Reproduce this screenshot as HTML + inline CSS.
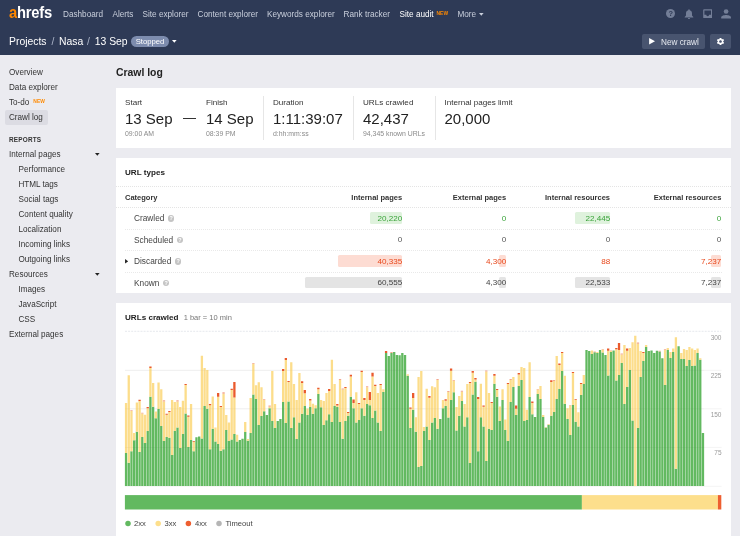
<!DOCTYPE html>
<html>
<head>
<meta charset="utf-8">
<style>
*{box-sizing:border-box;margin:0;padding:0}
html,body{width:740px;height:536px;overflow:hidden}
body{background:#ebebf0;font-family:"Liberation Sans",sans-serif;color:#333;position:relative;font-size:8.5px}
.abs{position:absolute;white-space:nowrap}
#hdr{position:absolute;left:0;top:0;width:740px;height:54.5px}
#bg,#fg{position:absolute;left:0;top:0;width:740px;height:536px}
#fg{-webkit-mask-image:linear-gradient(#000,#000);mask-image:linear-gradient(#000,#000)}
.cbg{position:absolute;left:116px;width:615px;background:#fff}
.bb{position:absolute;height:11.2px;border-radius:1.5px}
.nav{position:absolute;top:10.3px;font-size:8.2px;color:#c9cfdc;white-space:nowrap;line-height:10px}
.nav.act{color:#fff}
.bc{top:34.5px;font-size:10.4px;color:#fff;line-height:14px}
.new{color:#ff8a00;font-size:4.9px;font-weight:bold;position:relative;top:-2.5px;letter-spacing:0.1px;margin-left:0.5px}
.sb{position:absolute;left:9px;font-size:8.15px;color:#333;white-space:nowrap;line-height:10px}
.sb.in{left:18.5px}
.card{position:absolute;left:116px;width:615px}
.lbl{position:absolute;font-size:8.1px;color:#333;white-space:nowrap;line-height:10px;top:10px}
.big{position:absolute;font-size:15px;color:#222;white-space:nowrap;line-height:18px;top:22px}
.sub{position:absolute;font-size:6.9px;color:#8a8a8a;white-space:nowrap;line-height:8px;top:41.5px}
.vd{position:absolute;top:8px;height:44px;width:1px;background:#e6e6e6}
.th{position:absolute;font-size:7.5px;font-weight:bold;color:#333;white-space:nowrap;line-height:10px;top:34.5px}
.r{text-align:right}
.row{position:absolute;left:9px;width:596.3px;height:21.5px}
.row .c{position:absolute;top:5.5px;font-size:8.3px;line-height:10px;white-space:nowrap;color:#444}
.row .v{position:absolute;top:6.2px;font-size:8.1px;line-height:10px;white-space:nowrap;text-align:right;color:#555}
.row .b{position:absolute;top:4.9px;height:11.2px;border-radius:1.5px}
.q{display:inline-block;width:6.6px;height:6.6px;border-radius:50%;background:#c4c4c4;color:#fff;font-size:5.4px;line-height:6.9px;text-align:center;font-weight:bold;vertical-align:0.9px;margin-left:3.4px}
.dl{position:absolute;left:9px;width:597px;height:0;border-top:1px dotted #e9e9e9}
.row .v.g{color:#3aa33a}.row .v.rd{color:#e8491d}.row .v.k{color:#444}
</style>
</head>
<body>
<div id="bg">
<div class="abs" style="left:0;top:0;width:740px;height:54.500px;background:#2e3a56"></div>
<div class="abs" style="left:131px;top:35.800px;width:37.900px;height:11.200px;border-radius:5.600px;background:#7d8cae"></div>
<div class="abs" style="left:642px;top:33.5px;width:63px;height:15.5px;border-radius:2px;background:#48546f"></div>
<div class="abs" style="left:710px;top:33.5px;width:21px;height:15.5px;border-radius:2px;background:#48546f"></div>
<div class="abs" style="left:666.1px;top:9.2px;width:9.100px;height:9.100px;border-radius:50%;background:#737e97"></div>
<div class="abs" style="left:4.5px;top:109.5px;width:43px;height:15.5px;border-radius:2px;background:#dcdce3"></div>
<div class="cbg" style="top:88px;height:60px"></div>
<div class="cbg" style="top:158px;height:135px"></div>
<div class="cbg" style="top:302.700px;height:240px"></div>
<div class="bb" style="left:370.2px;top:212.4px;width:32.1px;background:#dff2dd"></div>
<div class="bb" style="left:575.1px;top:212.4px;width:35.2px;background:#dff2dd"></div>
<div class="bb" style="left:337.6px;top:255.4px;width:64.7px;background:#fddcd3"></div>
<div class="bb" style="left:499.4px;top:255.4px;width:6.9px;background:#fddcd3"></div>
<div class="bb" style="left:711.1px;top:255.4px;width:10.2px;background:#fddcd3"></div>
<div class="bb" style="left:305.3px;top:276.9px;width:97px;background:#e4e4e4"></div>
<div class="bb" style="left:499.4px;top:276.9px;width:6.9px;background:#e4e4e4"></div>
<div class="bb" style="left:575.1px;top:276.9px;width:35.2px;background:#e4e4e4"></div>
<div class="bb" style="left:711.1px;top:276.9px;width:10.2px;background:#e4e4e4"></div>
</div>
<div id="fg">
<div id="hdr">
  <div class="abs" style="left:9.2px;top:4.1px;font-size:15px;font-weight:bold;color:#fff;line-height:18px;letter-spacing:-0.25px;transform:scale(0.985,1.09);transform-origin:0 78%"><span style="color:#ff8800">a</span>hrefs</div>
  <div class="nav" style="left:63px">Dashboard</div>
  <div class="nav" style="left:112.5px">Alerts</div>
  <div class="nav" style="left:142.5px">Site explorer</div>
  <div class="nav" style="left:197.5px">Content explorer</div>
  <div class="nav" style="left:267px">Keywords explorer</div>
  <div class="nav" style="left:343.5px">Rank tracker</div>
  <div class="nav act" style="left:399.5px">Site audit <span class="new">NEW</span></div>
  <div class="nav" style="left:457.5px">More</div><svg class="abs" style="left:479.2px;top:12.8px" width="4.6" height="2.8" viewBox="0 0 10 6"><path fill="#c9cfdc" d="M0 0h10L5 6z"/></svg>

  <div class="abs bc" style="left:9px">Projects</div><div class="abs bc" style="left:51.5px;color:#aab3c7">/</div><div class="abs bc" style="left:59px">Nasa</div><div class="abs bc" style="left:87px;color:#aab3c7">/</div><div class="abs bc" style="left:94.7px">13 Sep</div>
  <div class="abs" style="left:131px;top:35.800px;width:37.900px;height:11.200px;color:#fff;font-size:7.700px;line-height:11.400px;text-align:center">Stopped</div>
  <svg class="abs" style="left:172.400px;top:40.300px" width="4.6" height="2.8" viewBox="0 0 10 6"><path fill="#fff" d="M0 0h10L5 6z"/></svg>

  <svg class="abs" style="left:648.9px;top:38.3px" width="6.2" height="6.6" viewBox="0 0 6 6.6"><path fill="#fff" d="M0 0L6 3.300L0 6.600z"/></svg>
  <div class="abs" style="left:661px;top:37.800px;font-size:8.200px;color:#e6e9f0;line-height:10px">New crawl</div>
  <svg class="abs" style="left:716px;top:37px" width="9" height="9" viewBox="0 0 24 24"><path fill="#fff" d="M19.14 12.94c.04-.3.06-.61.06-.94 0-.32-.02-.64-.07-.94l2.03-1.58a.49.49 0 0 0 .12-.61l-1.92-3.32a.488.488 0 0 0-.59-.22l-2.39.96c-.5-.38-1.03-.7-1.62-.94l-.36-2.54a.484.484 0 0 0-.48-.41h-3.84c-.24 0-.43.17-.47.41l-.36 2.54c-.59.24-1.13.57-1.62.94l-2.39-.96c-.22-.08-.47 0-.59.22L2.74 8.87c-.12.21-.08.47.12.61l2.03 1.58c-.05.3-.09.63-.09.94s.02.64.07.94l-2.03 1.58a.49.49 0 0 0-.12.61l1.92 3.32c.12.22.37.29.59.22l2.39-.96c.5.38 1.03.7 1.62.94l.36 2.54c.05.24.24.41.48.41h3.84c.24 0 .44-.17.47-.41l.36-2.54c.59-.24 1.13-.56 1.62-.94l2.39.96c.22.08.47 0 .59-.22l1.92-3.32c.12-.22.07-.47-.12-.61l-2.01-1.58zM12 15.6c-1.98 0-3.6-1.62-3.6-3.6s1.620-3.600 3.600-3.600 3.600 1.620 3.600 3.600-1.620 3.600-3.600 3.600z"/></svg>

  <!-- top right icons -->
  <div class="abs" style="left:666.1px;top:9.2px;width:9.100px;height:9.100px;color:#2e3a56;font-size:7.400px;font-weight:bold;line-height:9.500px;text-align:center">?</div>
  <svg class="abs" style="left:684.1px;top:8.800px" width="10" height="10.200" viewBox="0 0 20 20.400"><path fill="#737e97" d="M10 0.600c0.900 0 1.500 0.600 1.500 1.400v0.500c2.900 0.700 4.500 3.200 4.500 6.200v4.500l2.600 2.600v1H1.400v-1L4 13.200V8.700c0-3 1.600-5.500 4.500-6.200V2c0-0.800 0.600-1.400 1.500-1.400zM7.900 17.800h4.200c0 1.200-0.900 2.100-2.100 2.100s-2.100-0.900-2.100-2.100z"/></svg>
  <svg class="abs" style="left:702.7px;top:9.100px" width="9.400" height="9.400" viewBox="0 0 18.800 18.800"><path fill="#737e97" fill-rule="evenodd" d="M2 0.400h14.800c0.900 0 1.600 0.700 1.600 1.600v14.800c0 0.900-0.700 1.600-1.600 1.600H2c-0.900 0-1.600-0.700-1.600-1.600V2c0-0.900 0.700-1.600 1.600-1.600zM2.800 2.800v8.800h3.700c0 1.600 1.300 2.800 2.900 2.800s2.900-1.200 2.900-2.800h3.700V2.800z"/></svg>
  <svg class="abs" style="left:720.9px;top:9.100px" width="10.200" height="9.800" viewBox="0 0 20.400 19.600"><circle cx="10.200" cy="5" r="4.700" fill="#737e97"/><path fill="#737e97" d="M0.400 19.200v-2.400c0-3 6.500-4.600 9.800-4.600s9.800 1.600 9.800 4.600v2.400z"/></svg>
</div>

<!-- sidebar -->
<div class="sb" style="top:68px">Overview</div>
<div class="sb" style="top:83px">Data explorer</div>
<div class="sb" style="top:98px">To-do <span class="new" style="margin-left:1.7px">NEW</span></div>
<div class="sb" style="top:113px">Crawl log</div>
<div class="sb" style="top:134.5px;font-size:6.400px;font-weight:bold;letter-spacing:0.200px">REPORTS</div>
<div class="sb" style="top:150px">Internal pages</div>
<svg class="abs" style="left:95.2px;top:152.8px" width="4.6" height="2.8" viewBox="0 0 10 6"><path fill="#222" d="M0 0h10L5 6z"/></svg>
<div class="sb in" style="top:165px">Performance</div>
<div class="sb in" style="top:180px">HTML tags</div>
<div class="sb in" style="top:195px">Social tags</div>
<div class="sb in" style="top:210px">Content quality</div>
<div class="sb in" style="top:225px">Localization</div>
<div class="sb in" style="top:240px">Incoming links</div>
<div class="sb in" style="top:255px">Outgoing links</div>
<div class="sb" style="top:270px">Resources</div>
<svg class="abs" style="left:95.2px;top:272.8px" width="4.6" height="2.8" viewBox="0 0 10 6"><path fill="#222" d="M0 0h10L5 6z"/></svg>
<div class="sb in" style="top:285px">Images</div>
<div class="sb in" style="top:300px">JavaScript</div>
<div class="sb in" style="top:315px">CSS</div>
<div class="sb" style="top:330px">External pages</div>

<!-- title -->
<div class="abs" style="left:116px;top:65.7px;font-size:10.4px;font-weight:bold;color:#222;line-height:14px">Crawl log</div>

<!-- card 1 -->
<div class="card" style="top:88px;height:60px">
  <div class="lbl" style="left:9px">Start</div>
  <div class="big" style="left:9px">13 Sep</div>
  <div class="sub" style="left:9px">09:00 AM</div>
  <div class="abs" style="left:66.500px;top:30px;width:13.500px;height:1.200px;background:#333"></div>
  <div class="lbl" style="left:90px">Finish</div>
  <div class="big" style="left:90px">14 Sep</div>
  <div class="sub" style="left:90px">08:39 PM</div>
  <div class="vd" style="left:147px"></div>
  <div class="lbl" style="left:157px">Duration</div>
  <div class="big" style="left:157px">1:11:39:07</div>
  <div class="sub" style="left:157px">d:hh:mm:ss</div>
  <div class="vd" style="left:237px"></div>
  <div class="lbl" style="left:247px">URLs crawled</div>
  <div class="big" style="left:247px">42,437</div>
  <div class="sub" style="left:247px">94,345 known URLs</div>
  <div class="vd" style="left:319px"></div>
  <div class="lbl" style="left:328.500px">Internal pages limit</div>
  <div class="big" style="left:328.500px">20,000</div>
</div>

<!-- card 2 -->
<div class="card" style="top:158px;height:135px">
  <div class="abs" style="left:9px;top:9.7px;font-size:8.1px;font-weight:bold;color:#222;line-height:10px">URL types</div>
  <div class="abs" style="left:0;top:28px;width:615px;height:0;border-top:1px dotted #e4e4e4"></div>
  <div class="th" style="left:9px">Category</div>
  <div class="th r" style="right:328.8px">Internal pages</div>
  <div class="th r" style="right:224.8px">External pages</div>
  <div class="th r" style="right:121px">Internal resources</div>
  <div class="th r" style="right:9.7px">External resources</div>
  <div class="abs" style="left:0;top:49px;width:615px;height:0;border-top:1px dotted #e4e4e4"></div>

  <div class="row" style="top:49.500px">
    <div class="c" style="left:9px">Crawled<span class="q">?</span></div>
    <div class="v g" style="right:319px">20,220</div>
    <div class="v g" style="right:215px">0</div>
    <div class="v g" style="right:111px">22,445</div>
    <div class="v g" style="right:0">0</div>
  </div>
  <div class="dl" style="top:70.500px"></div>
  <div class="row" style="top:71px">
    <div class="c" style="left:9px">Scheduled<span class="q">?</span></div>
    <div class="v" style="right:319px">0</div>
    <div class="v" style="right:215px">0</div>
    <div class="v" style="right:111px">0</div>
    <div class="v" style="right:0">0</div>
  </div>
  <div class="dl" style="top:92px"></div>
  <div class="row" style="top:92.500px">
    <svg class="abs" style="left:0.300px;top:8.500px" width="3.200" height="4.600" viewBox="0 0 4 6"><path fill="#222" d="M0 0L4 3L0 6z"/></svg>
    <div class="c" style="left:9px">Discarded<span class="q">?</span></div>
    <div class="v rd" style="right:319px">40,335</div>
    <div class="v rd" style="right:215px">4,300</div>
    <div class="v rd" style="right:111px">88</div>
    <div class="v rd" style="right:0">7,237</div>
  </div>
  <div class="dl" style="top:113.500px"></div>
  <div class="row" style="top:114px">
    <div class="c" style="left:9px">Known<span class="q">?</span></div>
    <div class="v k" style="right:319px">60,555</div>
    <div class="v k" style="right:215px">4,300</div>
    <div class="v k" style="right:111px">22,533</div>
    <div class="v k" style="right:0">7,237</div>
  </div>
</div>

<!-- card 3 -->
<div class="card" style="top:302.700px;height:240px">
  <div class="abs" style="left:9px;top:10.300px;font-size:8.1px;font-weight:bold;color:#222;line-height:10px">URLs crawled</div>
  <div class="abs" style="left:67.700px;top:10.500px;font-size:7.500px;color:#777;line-height:10px">1 bar = 10 min</div>
  <svg id="chart" class="abs" style="left:0;top:-0.700px" width="615" height="240" viewBox="116 302 615 240">
    <g id="grid" stroke="#ebebeb" stroke-width="0.6">
      <line x1="125" x2="721.5" y1="331.3" y2="331.3" stroke="#e0e3e8" stroke-width="0.8" stroke-dasharray="2 1.1"/>
      <line x1="125" x2="721.5" y1="370.3" y2="370.3"/>
      <line x1="125" x2="721.5" y1="408.8" y2="408.8"/>
      <line x1="125" x2="721.5" y1="447.4" y2="447.4"/>
      <line x1="125" x2="721.5" y1="486.3" y2="486.3"/>
    </g>
    <g id="bars">
<path fill="#62b960" d="M124.9 486v-33h2.3V486zM127.61 486v-23.3h2.3V486zM130.32 486v-34.8h2.3V486zM133.03 486v-45.7h2.3V486zM135.73 486v-54.2h2.3V486zM138.44 486v-34h2.3V486zM141.15 486v-49.1h2.3V486zM143.86 486v-43.1h2.3V486zM146.57 486v-54.9h2.3V486zM149.28 486v-89.3h2.3V486zM151.99 486v-79.2h2.3V486zM154.69 486v-67.8h2.3V486zM157.4 486v-77h2.3V486zM160.11 486v-59.9h2.3V486zM162.82 486v-44.9h2.3V486zM165.53 486v-49h2.3V486zM168.24 486v-48.2h2.3V486zM170.95 486v-31h2.3V486zM173.65 486v-54.9h2.3V486zM176.36 486v-58.4h2.3V486zM179.07 486v-37.9h2.3V486zM181.78 486v-51.9h2.3V486zM184.49 486v-72.5h2.3V486zM187.2 486v-39h2.3V486zM189.91 486v-46h2.3V486zM192.62 486v-34.8h2.3V486zM195.32 486v-48.7h2.3V486zM198.03 486v-49.4h2.3V486zM200.74 486v-47.5h2.3V486zM203.45 486v-80.1h2.3V486zM206.16 486v-77.3h2.3V486zM208.87 486v-36.7h2.3V486zM211.58 486v-57.3h2.3V486zM214.28 486v-44.6h2.3V486zM216.99 486v-42h2.3V486zM219.7 486v-35.2h2.3V486zM222.41 486v-36.7h2.3V486zM225.12 486v-56.1h2.3V486zM227.83 486v-44.9h2.3V486zM230.54 486v-46.4h2.3V486zM233.24 486v-51.9h2.3V486zM235.95 486v-44.5h2.3V486zM238.66 486v-46h2.3V486zM241.37 486v-47.2h2.3V486zM244.08 486v-53.9h2.3V486zM246.79 486v-45.2h2.3V486zM249.5 486v-53.1h2.3V486zM252.2 486v-91.6h2.3V486zM254.91 486v-87.1h2.3V486zM257.62 486v-61h2.3V486zM260.33 486v-70h2.3V486zM263.04 486v-74.8h2.3V486zM265.75 486v-71h2.3V486zM268.46 486v-77.8h2.3V486zM271.16 486v-65.1h2.3V486zM273.87 486v-58.1h2.3V486zM276.58 486v-65.1h2.3V486zM279.29 486v-66.9h2.3V486zM282 486v-84.1h2.3V486zM284.71 486v-63.1h2.3V486zM287.42 486v-84.4h2.3V486zM290.12 486v-58.1h2.3V486zM292.83 486v-68.8h2.3V486zM295.54 486v-46.9h2.3V486zM298.25 486v-63.6h2.3V486zM300.96 486v-72.2h2.3V486zM303.67 486v-80.1h2.3V486zM306.38 486v-71h2.3V486zM309.08 486v-79h2.3V486zM311.79 486v-72.2h2.3V486zM314.5 486v-77.8h2.3V486zM317.21 486v-92h2.3V486zM319.92 486v-78.7h2.3V486zM322.63 486v-60.9h2.3V486zM325.34 486v-65.8h2.3V486zM328.05 486v-71.8h2.3V486zM330.75 486v-63.9h2.3V486zM333.46 486v-80.1h2.3V486zM336.17 486v-79.1h2.3V486zM338.88 486v-63.9h2.3V486zM341.59 486v-47.2h2.3V486zM344.3 486v-65.1h2.3V486zM347.01 486v-70.3h2.3V486zM349.71 486v-89.3h2.3V486zM352.42 486v-77.8h2.3V486zM355.13 486v-63.6h2.3V486zM357.84 486v-66.1h2.3V486zM360.55 486v-77.8h2.3V486zM363.26 486v-70.3h2.3V486zM365.97 486v-81.9h2.3V486zM368.67 486v-80.7h2.3V486zM371.38 486v-68.1h2.3V486zM374.09 486v-75.5h2.3V486zM376.8 486v-63.6h2.3V486zM379.51 486v-54.9h2.3V486zM382.22 486v-94.1h2.3V486zM384.93 486v-133.1h2.3V486zM387.63 486v-130.1h2.3V486zM390.34 486v-133.1h2.3V486zM393.05 486v-134.1h2.3V486zM395.76 486v-131.1h2.3V486zM398.47 486v-130.7h2.3V486zM401.18 486v-132.9h2.3V486zM403.89 486v-131.1h2.3V486zM406.59 486v-110.2h2.3V486zM409.3 486v-57.9h2.3V486zM412.01 486v-76.3h2.3V486zM414.72 486v-54.2h2.3V486zM417.43 486v-19.1h2.3V486zM420.14 486v-20h2.3V486zM422.85 486v-54.9h2.3V486zM425.55 486v-59.4h2.3V486zM428.26 486v-46h2.3V486zM430.97 486v-63.6h2.3V486zM433.68 486v-68.1h2.3V486zM436.39 486v-57.2h2.3V486zM439.1 486v-66.9h2.3V486zM441.81 486v-77.8h2.3V486zM444.51 486v-80.1h2.3V486zM447.22 486v-68.4h2.3V486zM449.93 486v-86.1h2.3V486zM452.64 486v-93.8h2.3V486zM455.35 486v-55.4h2.3V486zM458.06 486v-70.3h2.3V486zM460.77 486v-84.9h2.3V486zM463.48 486v-59.4h2.3V486zM466.18 486v-68.8h2.3V486zM468.89 486v-23h2.3V486zM471.6 486v-91.6h2.3V486zM474.31 486v-104.3h2.3V486zM477.02 486v-34.8h2.3V486zM479.73 486v-68.8h2.3V486zM482.44 486v-59.4h2.3V486zM485.14 486v-25.1h2.3V486zM487.85 486v-57.3h2.3V486zM490.56 486v-56.1h2.3V486zM493.27 486v-102.3h2.3V486zM495.98 486v-89.3h2.3V486zM498.69 486v-65.1h2.3V486zM501.4 486v-86.1h2.3V486zM504.1 486v-56.1h2.3V486zM506.81 486v-44.9h2.3V486zM509.52 486v-84.1h2.3V486zM512.23 486v-99h2.3V486zM514.94 486v-71h2.3V486zM517.65 486v-100.1h2.3V486zM520.36 486v-106.1h2.3V486zM523.06 486v-65.1h2.3V486zM525.77 486v-66.1h2.3V486zM528.48 486v-89h2.3V486zM531.19 486v-71.8h2.3V486zM533.9 486v-69.1h2.3V486zM536.61 486v-92h2.3V486zM539.32 486v-87.1h2.3V486zM542.02 486v-69.1h2.3V486zM544.73 486v-58.4h2.3V486zM547.44 486v-61.3h2.3V486zM550.15 486v-70.3h2.3V486zM552.86 486v-74h2.3V486zM555.57 486v-87.1h2.3V486zM558.28 486v-97.1h2.3V486zM560.98 486v-115h2.3V486zM563.69 486v-82.2h2.3V486zM566.4 486v-66.9h2.3V486zM569.11 486v-50.9h2.3V486zM571.82 486v-81.1h2.3V486zM574.53 486v-64.3h2.3V486zM577.24 486v-59.4h2.3V486zM579.94 486v-91.1h2.3V486zM582.65 486v-102h2.3V486zM585.36 486v-135.9h2.3V486zM588.07 486v-134.9h2.3V486zM590.78 486v-131.9h2.3V486zM593.49 486v-133.8h2.3V486zM596.2 486v-133.1h2.3V486zM598.9 486v-135.9h2.3V486zM601.61 486v-133.4h2.3V486zM604.32 486v-131.1h2.3V486zM607.03 486v-110.5h2.3V486zM609.74 486v-134.1h2.3V486zM612.45 486v-135.6h2.3V486zM615.16 486v-105.5h2.3V486zM617.87 486v-111h2.3V486zM620.57 486v-122.9h2.3V486zM623.28 486v-81.9h2.3V486zM625.99 486v-99h2.3V486zM628.7 486v-115.9h2.3V486zM631.41 486v-65.4h2.3V486zM636.83 486v-57.9h2.3V486zM639.53 486v-109h2.3V486zM642.24 486v-124.9h2.3V486zM644.95 486v-139h2.3V486zM647.66 486v-134.9h2.3V486zM650.37 486v-135.6h2.3V486zM653.08 486v-132.9h2.3V486zM655.79 486v-135.2h2.3V486zM658.49 486v-134.4h2.3V486zM661.2 486v-127.7h2.3V486zM663.91 486v-101h2.3V486zM666.62 486v-135.9h2.3V486zM669.33 486v-128.1h2.3V486zM672.04 486v-134.1h2.3V486zM674.75 486v-17.3h2.3V486zM677.45 486v-139.8h2.3V486zM680.16 486v-127h2.3V486zM682.87 486v-127h2.3V486zM685.58 486v-119.9h2.3V486zM688.29 486v-125.9h2.3V486zM691 486v-119.9h2.3V486zM693.71 486v-120.4h2.3V486zM696.41 486v-132.9h2.3V486zM699.12 486v-126.2h2.3V486zM701.83 486v-53.1h2.3V486z"/>
<path fill="#fcdd8b" d="M124.9 453v-49.9h2.3V453zM127.61 462.7v-87.4h2.3V462.7zM130.32 451.2v-40.2h2.3V451.2zM133.03 440.3v-7.4h2.3V440.3zM135.73 431.8v-29.2h2.3V431.8zM138.44 452v-50.9h2.3V452zM141.15 436.9v-23.4h2.3V436.9zM143.86 442.9v-28.2h2.3V442.9zM146.57 431.1v-22.9h2.3V431.1zM149.28 396.7v-28.7h2.3V396.7zM151.99 406.8v-23.9h2.3V406.8zM154.69 418.2v-6.7h2.3V418.2zM157.4 409v-26.4h2.3V409zM160.11 426.1v-36.9h2.3V426.1zM162.82 441.1v-39.7h2.3V441.1zM165.53 437v-22.3h2.3V437zM168.24 437.8v-25.8h2.3V437.8zM170.95 455v-54.9h2.3V455zM173.65 431.1v-29.1h2.3V431.1zM176.36 427.6v-26.2h2.3V427.6zM179.07 448.1v-41h2.3V448.1zM181.78 434.1v-33.4h2.3V434.1zM184.49 413.5v-28.5h2.3V413.5zM187.2 447v-30.3h2.3V447zM189.91 440v-35.9h2.3V440zM192.62 451.2v-9.4h2.3V451.2zM200.74 438.5v-82.7h2.3V438.5zM203.45 405.9v-37.9h2.3V405.9zM206.16 408.7v-38.6h2.3V408.7zM208.87 449.3v-44.1h2.3V449.3zM211.58 428.7v-32.3h2.3V428.7zM214.28 441.4v-13.8h2.3V441.4zM216.99 444v-47.3h2.3V444zM219.7 450.8v-43.7h2.3V450.8zM222.41 449.3v-55.6h2.3V449.3zM225.12 429.9v-14.9h2.3V429.9zM227.83 441.1v-18.7h2.3V441.1zM230.54 439.6v-49.6h2.3V439.6zM233.24 434.1v-36.7h2.3V434.1zM235.95 441.5v-6.7h2.3V441.5zM244.08 432.1v-10h2.3V432.1zM246.79 440.8v-1.7h2.3V440.8zM249.5 432.9v-34.8h2.3V432.9zM252.2 394.4v-30.6h2.3V394.4zM254.91 398.9v-13.7h2.3V398.9zM257.62 425v-42.8h2.3V425zM260.33 416v-28.7h2.3V416zM263.04 411.2v-11.3h2.3V411.2zM268.46 408.2v-1.5h2.3V408.2zM271.16 420.9v-49.9h2.3V420.9zM273.87 427.9v-23.8h2.3V427.9zM282 401.9v-30.9h2.3V401.9zM284.71 422.9v-62.8h2.3V422.9zM287.42 401.6v-19.6h2.3V401.6zM290.12 427.9v-65.6h2.3V427.9zM292.83 417.2v-33.2h2.3V417.2zM295.54 439.1v-39.2h2.3V439.1zM298.25 422.4v-49.3h2.3V422.4zM300.96 413.8v-30.9h2.3V413.8zM303.67 405.9v-12.7h2.3V405.9zM306.38 415v-6.5h2.3V415zM309.08 407v-6.6h2.3V407zM311.79 413.8v-10h2.3V413.8zM314.5 408.2v-2.9h2.3V408.2zM317.21 394v-4.8h2.3V394zM319.92 407.3v-7.4h2.3V407.3zM322.63 425.1v-24h2.3V425.1zM325.34 420.2v-27.3h2.3V420.2zM328.05 414.2v-23.2h2.3V414.2zM330.75 422.1v-62.3h2.3V422.1zM333.46 405.9v-21.9h2.3V405.9zM336.17 406.9v-1.3h2.3V406.9zM338.88 422.1v-42.2h2.3V422.1zM341.59 438.8v-49.3h2.3V438.8zM344.3 420.9v-32.9h2.3V420.9zM347.01 415.7v-2.7h2.3V415.7zM349.71 396.7v-20.2h2.3V396.7zM352.42 408.2v-5.1h2.3V408.2zM355.13 422.4v-30.2h2.3V422.4zM357.84 419.9v-15.8h2.3V419.9zM360.55 408.2v-36.2h2.3V408.2zM363.26 415.7v-15.8h2.3V415.7zM365.97 404.1v-16.8h2.3V404.1zM368.67 405.3v-5.4h2.3V405.3zM371.38 417.9v-41.4h2.3V417.9zM374.09 410.5v-24.6h2.3V410.5zM376.8 422.4v-29.5h2.3V422.4zM379.51 431.1v-46.1h2.3V431.1zM382.22 391.9v-2.7h2.3V391.9zM406.59 375.8v-1.5h2.3V375.8zM409.3 428.1v-19.4h2.3V428.1zM412.01 409.7v-11.8h2.3V409.7zM414.72 431.8v-14.6h2.3V431.8zM417.43 466.9v-89.9h2.3V466.9zM420.14 466v-95h2.3V466zM422.85 431.1v-4.2h2.3V431.1zM425.55 426.6v-37.9h2.3V426.6zM428.26 440v-42.3h2.3V440zM430.97 422.4v-36.2h2.3V422.4zM433.68 417.9v-30.6h2.3V417.9zM436.39 428.8v-48.9h2.3V428.8zM441.81 408.2v-8.3h2.3V408.2zM444.51 405.9v-5.1h2.3V405.9zM447.22 417.6v-25.7h2.3V417.6zM449.93 399.9v-29.1h2.3V399.9zM452.64 392.2v-11.5h2.3V392.2zM455.35 430.6v-23.5h2.3V430.6zM458.06 415.7v-19.8h2.3V415.7zM460.77 401.1v-9.4h2.3V401.1zM463.48 426.6v-22.5h2.3V426.6zM466.18 417.2v-33.2h2.3V417.2zM468.89 463v-80.1h2.3V463zM471.6 394.4v-21.6h2.3V394.4zM474.31 381.7v-2.2h2.3V381.7zM477.02 451.2v-52.3h2.3V451.2zM479.73 417.2v-33.5h2.3V417.2zM482.44 426.6v-19.9h2.3V426.6zM485.14 460.9v-89.3h2.3V460.9zM487.85 428.7v-35.8h2.3V428.7zM490.56 429.9v-27h2.3V429.9zM493.27 383.7v-7.9h2.3V383.7zM495.98 396.7v-6.7h2.3V396.7zM498.69 420.9v-14.5h2.3V420.9zM501.4 399.9v-10.7h2.3V399.9zM504.1 429.9v-10.5h2.3V429.9zM506.81 441.1v-57.1h2.3V441.1zM509.52 401.9v-22h2.3V401.9zM512.23 387v-10h2.3V387zM514.94 415v-6.3h2.3V415zM517.65 385.9v-11.3h2.3V385.9zM520.36 379.9v-12.8h2.3V379.9zM523.06 420.9v-52.9h2.3V420.9zM525.77 419.9v-10.2h2.3V419.9zM528.48 397v-34.7h2.3V397zM531.19 414.2v-11.3h2.3V414.2zM536.61 394v-4.4h2.3V394zM539.32 398.9v-13h2.3V398.9zM542.02 416.9v-1.9h2.3V416.9zM544.73 427.6v-0.7h2.3V427.6zM547.44 424.7v-0.7h2.3V424.7zM550.15 415.7v-33.7h2.3V415.7zM552.86 412v-31h2.3V412zM555.57 398.9v-42.8h2.3V398.9zM558.28 388.9v-24h2.3V388.9zM560.98 371v-18.1h2.3V371zM563.69 403.8v-28h2.3V403.8zM566.4 419.1v-10.9h2.3V419.1zM569.11 435.1v-29.5h2.3V435.1zM571.82 404.9v-31.8h2.3V404.9zM574.53 421.7v-21.6h2.3V421.7zM577.24 426.6v-14.3h2.3V426.6zM579.94 394.9v-10.9h2.3V394.9zM582.65 384v-9h2.3V384zM590.78 354.1v-3.7h2.3V354.1zM596.2 352.9v-1h2.3V352.9zM601.61 352.6v-3h2.3V352.6zM607.03 375.5v-24.8h2.3V375.5zM609.74 351.9v-0.8h2.3V351.9zM615.16 380.5v-31.3h2.3V380.5zM617.87 375v-24.9h2.3V375zM620.57 363.1v-8.7h2.3V363.1zM623.28 404.1v-59.2h2.3V404.1zM625.99 387v-36.2h2.3V387zM628.7 370.1v-22h2.3V370.1zM631.41 420.6v-78.4h2.3V420.6zM634.12 486v-150.2h2.3V486zM636.83 428.1v-84.4h2.3V428.1zM639.53 377v-25.9h2.3V377zM642.24 361.1v-8.2h2.3V361.1zM644.95 347v-2.1h2.3V347zM663.91 385v-34.9h2.3V385zM666.62 350.1v-2h2.3V350.1zM669.33 357.9v-6h2.3V357.9zM672.04 351.9v-3.3h2.3V351.9zM674.75 468.7v-131.4h2.3V468.7zM680.16 359v-5.9h2.3V359zM682.87 359v-10.1h2.3V359zM685.58 366.1v-16h2.3V366.1zM688.29 360.1v-13h2.3V360.1zM691 366.1v-17.5h2.3V366.1zM693.71 365.6v-15.5h2.3V365.6zM696.41 353.1v-4.7h2.3V353.1zM699.12 359.8v-1.5h2.3V359.8z"/>
<path fill="#ea5a2d" d="M138.44 401.1v-1.3h2.3V401.1zM146.57 408.2v-1.1h2.3V408.2zM149.28 368v-1.5h2.3V368zM165.53 414.7v-0.9h2.3V414.7zM168.24 412v-1.1h2.3V412zM184.49 385v-1h2.3V385zM187.2 416.7v-1.3h2.3V416.7zM192.62 441.8v-0.7h2.3V441.8zM208.87 405.2v-1.1h2.3V405.2zM216.99 396.7v-3.6h2.3V396.7zM219.7 407.1v-1.2h2.3V407.1zM230.54 390v-1.3h2.3V390zM233.24 397.4v-15.4h2.3V397.4zM282 371v-2h2.3V371zM284.71 360.1v-2h2.3V360.1zM287.42 382v-1h2.3V382zM300.96 382.9v-1.6h2.3V382.9zM303.67 393.2v-3.3h2.3V393.2zM309.08 400.4v-1.4h2.3V400.4zM317.21 389.2v-1.5h2.3V389.2zM328.05 391v-2.1h2.3V391zM336.17 405.6v-1.5h2.3V405.6zM344.3 388v-1h2.3V388zM347.01 413v-1h2.3V413zM349.71 376.5v-1.8h2.3V376.5zM352.42 403.1v-3.5h2.3V403.1zM357.84 404.1v-1.2h2.3V404.1zM360.55 372v-1.3h2.3V372zM363.26 399.9v-1.8h2.3V399.9zM368.67 399.9v-8h2.3V399.9zM371.38 376.5v-3.7h2.3V376.5zM374.09 385.9v-1.2h2.3V385.9zM379.51 385v-1h2.3V385zM384.93 352.9v-1.8h2.3V352.9zM409.3 408.7v-1.2h2.3V408.7zM412.01 397.9v-5h2.3V397.9zM428.26 397.7v-1.8h2.3V397.7zM444.51 400.8v-1.6h2.3V400.8zM449.93 370.8v-2.2h2.3V370.8zM468.89 382.9v-0.9h2.3V382.9zM471.6 372.8v-1.8h2.3V372.8zM474.31 379.5v-1.5h2.3V379.5zM477.02 398.9v-1.9h2.3V398.9zM482.44 406.7v-1.1h2.3V406.7zM490.56 402.9v-1h2.3V402.9zM493.27 375.8v-1.8h2.3V375.8zM495.98 390v-1.1h2.3V390zM506.81 384v-1.1h2.3V384zM514.94 408.7v-3.1h2.3V408.7zM517.65 374.6v-1.5h2.3V374.6zM531.19 402.9v-1.3h2.3V402.9zM550.15 382v-1.8h2.3V382zM558.28 364.9v-1.5h2.3V364.9zM560.98 352.9v-1h2.3V352.9zM571.82 373.1v-1.1h2.3V373.1zM574.53 400.1v-0.9h2.3V400.1zM579.94 384v-1.1h2.3V384zM607.03 350.7v-2.3h2.3V350.7zM615.16 349.2v-1.3h2.3V349.2zM617.87 350.1v-7.2h2.3V350.1zM625.99 350.8v-2.2h2.3V350.8zM642.24 352.9v-1h2.3V352.9z"/>
<path fill="#f4a68d" d="M130.32 411v-0.8h2.3V411zM141.15 413.5v-0.8h2.3V413.5zM162.82 401.4v-1.2h2.3V401.4zM176.36 401.4v-1.2h2.3V401.4zM222.41 393.7v-1.5h2.3V393.7zM252.2 363.8v-0.7h2.3V363.8zM263.04 399.9v-0.7h2.3V399.9zM268.46 406.7v-1.1h2.3V406.7zM338.88 379.9v-0.9h2.3V379.9zM341.59 389.5v-1.1h2.3V389.5zM365.97 387.3v-1.1h2.3V387.3zM390.34 352.9v-1h2.3V352.9zM436.39 379.9v-0.9h2.3V379.9zM447.22 391.9v-0.9h2.3V391.9zM452.64 380.7v-0.8h2.3V380.7zM460.77 391.7v-1h2.3V391.7zM485.14 371.6v-1.1h2.3V371.6zM509.52 379.9v-0.9h2.3V379.9zM536.61 389.6v-0.7h2.3V389.6zM552.86 381v-1.1h2.3V381zM569.11 405.6v-0.7h2.3V405.6zM593.49 352.2v-0.8h2.3V352.2zM601.61 349.6v-0.7h2.3V349.6zM609.74 351.1v-0.7h2.3V351.1zM620.57 354.4v-1h2.3V354.4zM636.83 343.7v-1.1h2.3V343.7zM658.49 351.6v-0.8h2.3V351.6zM663.91 350.1v-0.9h2.3V350.1z"/>
</g>
    <g id="grid2" stroke="#000" stroke-opacity="0.05" stroke-width="0.600"><line x1="125" x2="704" y1="370.300" y2="370.300"/><line x1="125" x2="704" y1="408.800" y2="408.800"/><line x1="125" x2="704" y1="447.400" y2="447.400"/></g>
    <g font-family="Liberation Sans, sans-serif" font-size="6.500" fill="#999" text-anchor="end">
      <text x="721.500" y="339.500">300</text>
      <text x="721.500" y="378.300">225</text>
      <text x="721.500" y="416.900">150</text>
      <text x="721.500" y="455.300">75</text>
    </g>
    <rect x="124.900" y="495.100" width="457" height="14.400" fill="#62b960"/>
    <rect x="581.900" y="495.100" width="136" height="14.400" fill="#fddf8c"/>
    <rect x="717.900" y="495.100" width="3.400" height="14.400" fill="#ee5f30"/>
        <g font-family="Liberation Sans, sans-serif" font-size="7.600" fill="#444">
      <circle cx="128" cy="523.500" r="2.750" fill="#62b960"/><text x="134" y="526.200">2xx</text>
      <circle cx="158.200" cy="523.500" r="2.750" fill="#fddf8c"/><text x="164.500" y="526.200">3xx</text>
      <circle cx="188.400" cy="523.500" r="2.750" fill="#ee5f30"/><text x="195" y="526.200">4xx</text>
      <circle cx="219" cy="523.500" r="2.750" fill="#b5b5b5"/><text x="225.500" y="526.200">Timeout</text>
    </g>
  </svg>
</div>
</div>
</body>
</html>
